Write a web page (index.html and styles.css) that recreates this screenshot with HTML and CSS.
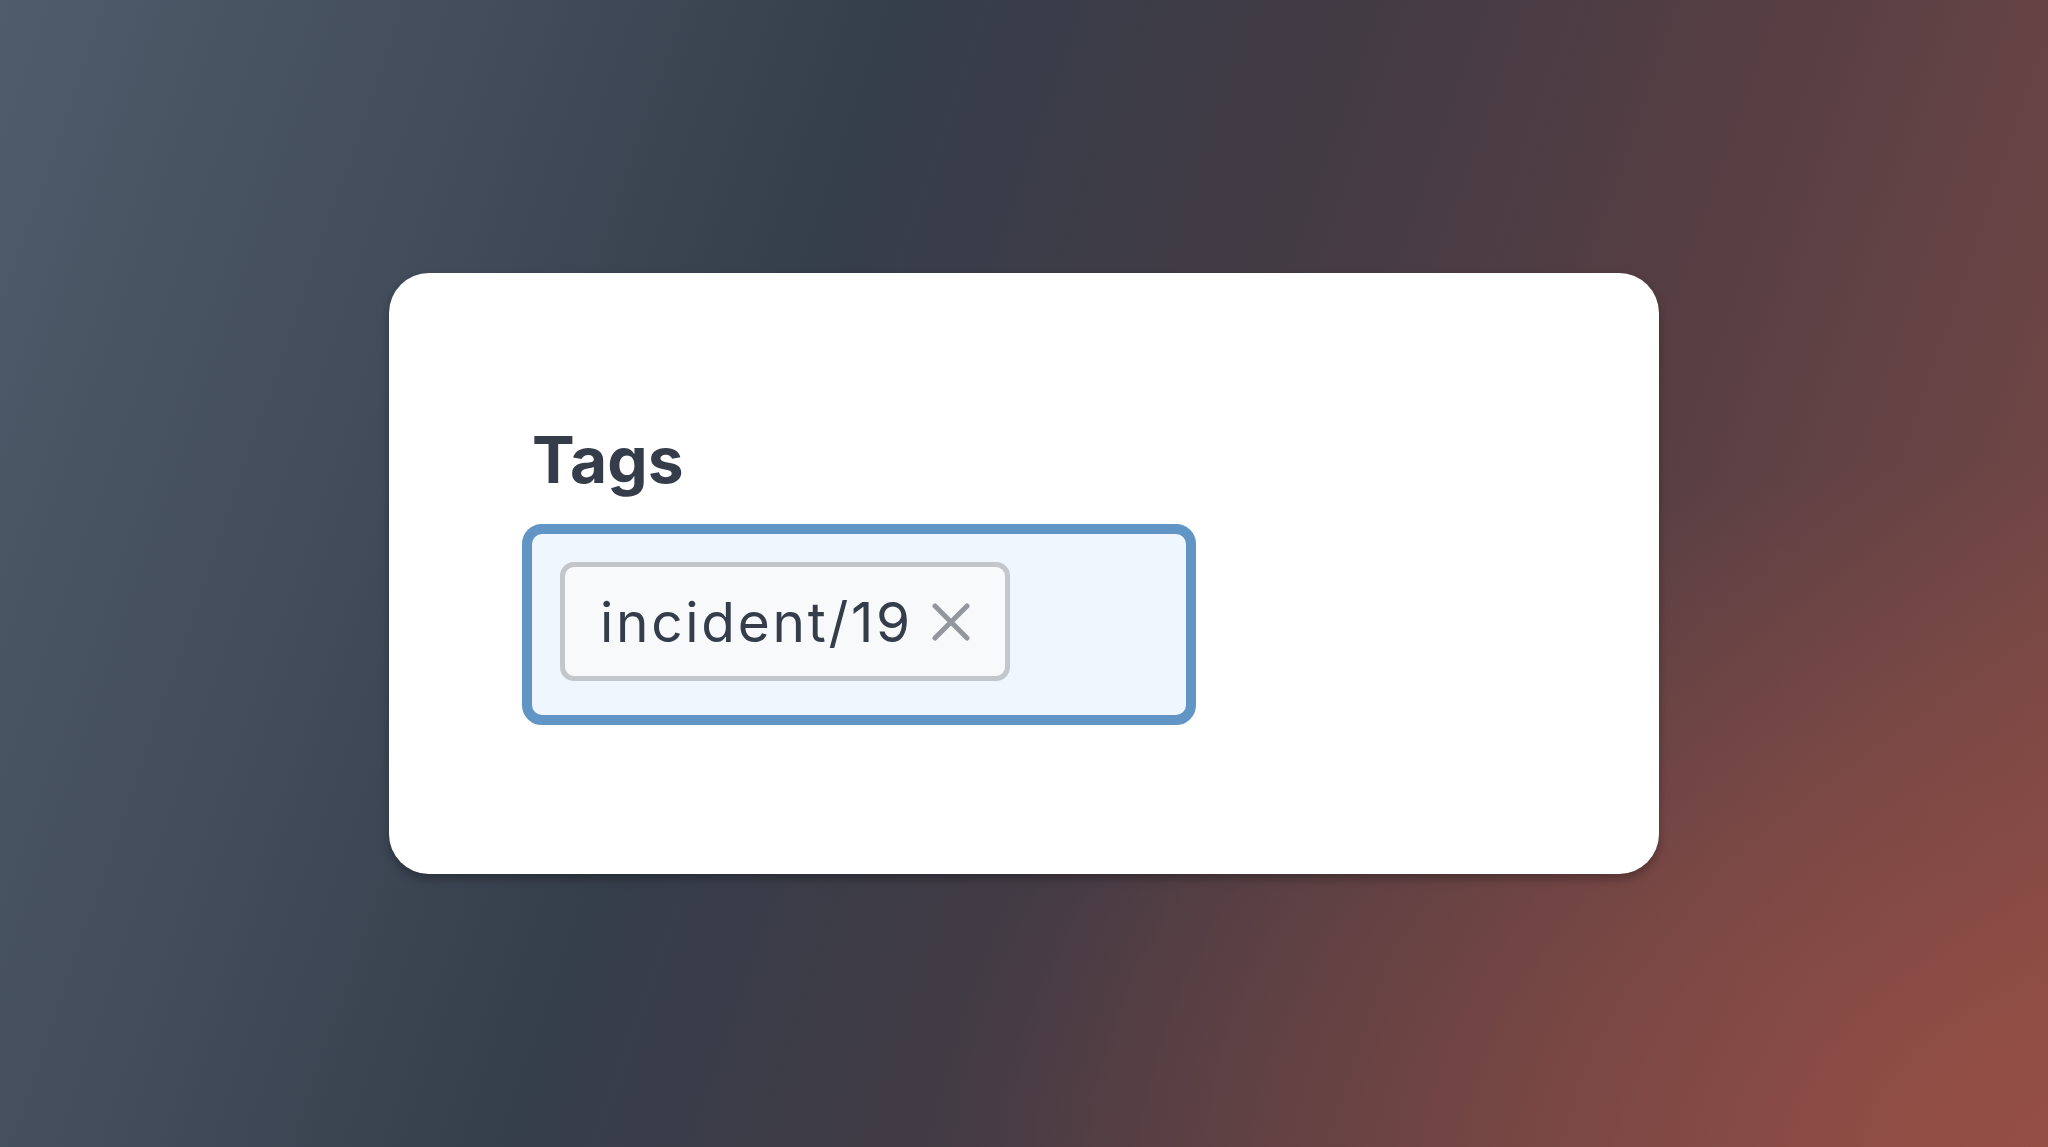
FILE: index.html
```html
<!DOCTYPE html>
<html lang="en">
<head>
    <meta charset="UTF-8">
    <meta name="viewport" content="width=device-width, initial-scale=1.0">
    <title>Tags</title>
    <link rel="stylesheet" href="styles.css">
</head>
<body>

<!-- Cartão com o campo de tags -->
<div class="card">
    <label class="field-label" for="tag-input">Tags</label>
    <div class="tag-input" id="tag-input">
        <span class="tag">
            <span class="tag-text">incident/19</span>
            <svg class="tag-remove" width="38" height="38" viewBox="0 0 38 38" aria-hidden="true">
                <path d="M3 3 L35 35 M35 3 L3 35" />
            </svg>
        </span>
    </div>
</div>

</body>
</html>
```

FILE: styles.css
```css
/* Reset básico */
* {
    margin: 0;
    padding: 0;
    box-sizing: border-box;
    font-family: Inter, "Noto Sans", sans-serif;
}

/* Fundo */
body {
    height: 100vh;
    display: flex;
    justify-content: center;
    align-items: center;
    background:
        radial-gradient(ellipse 55% 60% at 100% 100%, rgba(158, 80, 68, 0.75), rgba(158, 80, 68, 0) 100%),
        linear-gradient(109deg, #505b6b 0%, #414b59 22%, #353e4b 37%, #433b44 56%, #553e43 72%, #684445 86%, #7c4944 100%);
}

/* Cartão */
.card {
    width: 1270px;
    height: 601px;
    background: #fff;
    border-radius: 40px;
    padding: 155px 133px 0;
    box-shadow: 0 5px 10px rgba(0, 0, 0, 0.28);
}

.field-label {
    display: block;
    font-size: 64px;
    line-height: 64px;
    font-weight: 650;
    color: #353d4a;
    margin-left: 10px;
    margin-bottom: 32px;
}

/* Campo */
.tag-input {
    width: 674px;
    height: 201px;
    padding: 28px 28px 34px;
    border: 10px solid #6195c5;
    border-radius: 20px;
    background: #eff6fd;
    display: flex;
    align-items: flex-start;
}

.tag {
    display: flex;
    align-items: center;
    gap: 19px;
    height: 119px;
    padding: 0 35px;
    background: #f8f9fb;
    border: 5px solid #c3c7cc;
    border-radius: 14px;
}

.tag-text {
    font-size: 55px;
    letter-spacing: 2.7px;
    color: #353d4a;
}

.tag-remove path {
    fill: none;
    stroke: #92979d;
    stroke-width: 5;
    stroke-linecap: round;
}
```
